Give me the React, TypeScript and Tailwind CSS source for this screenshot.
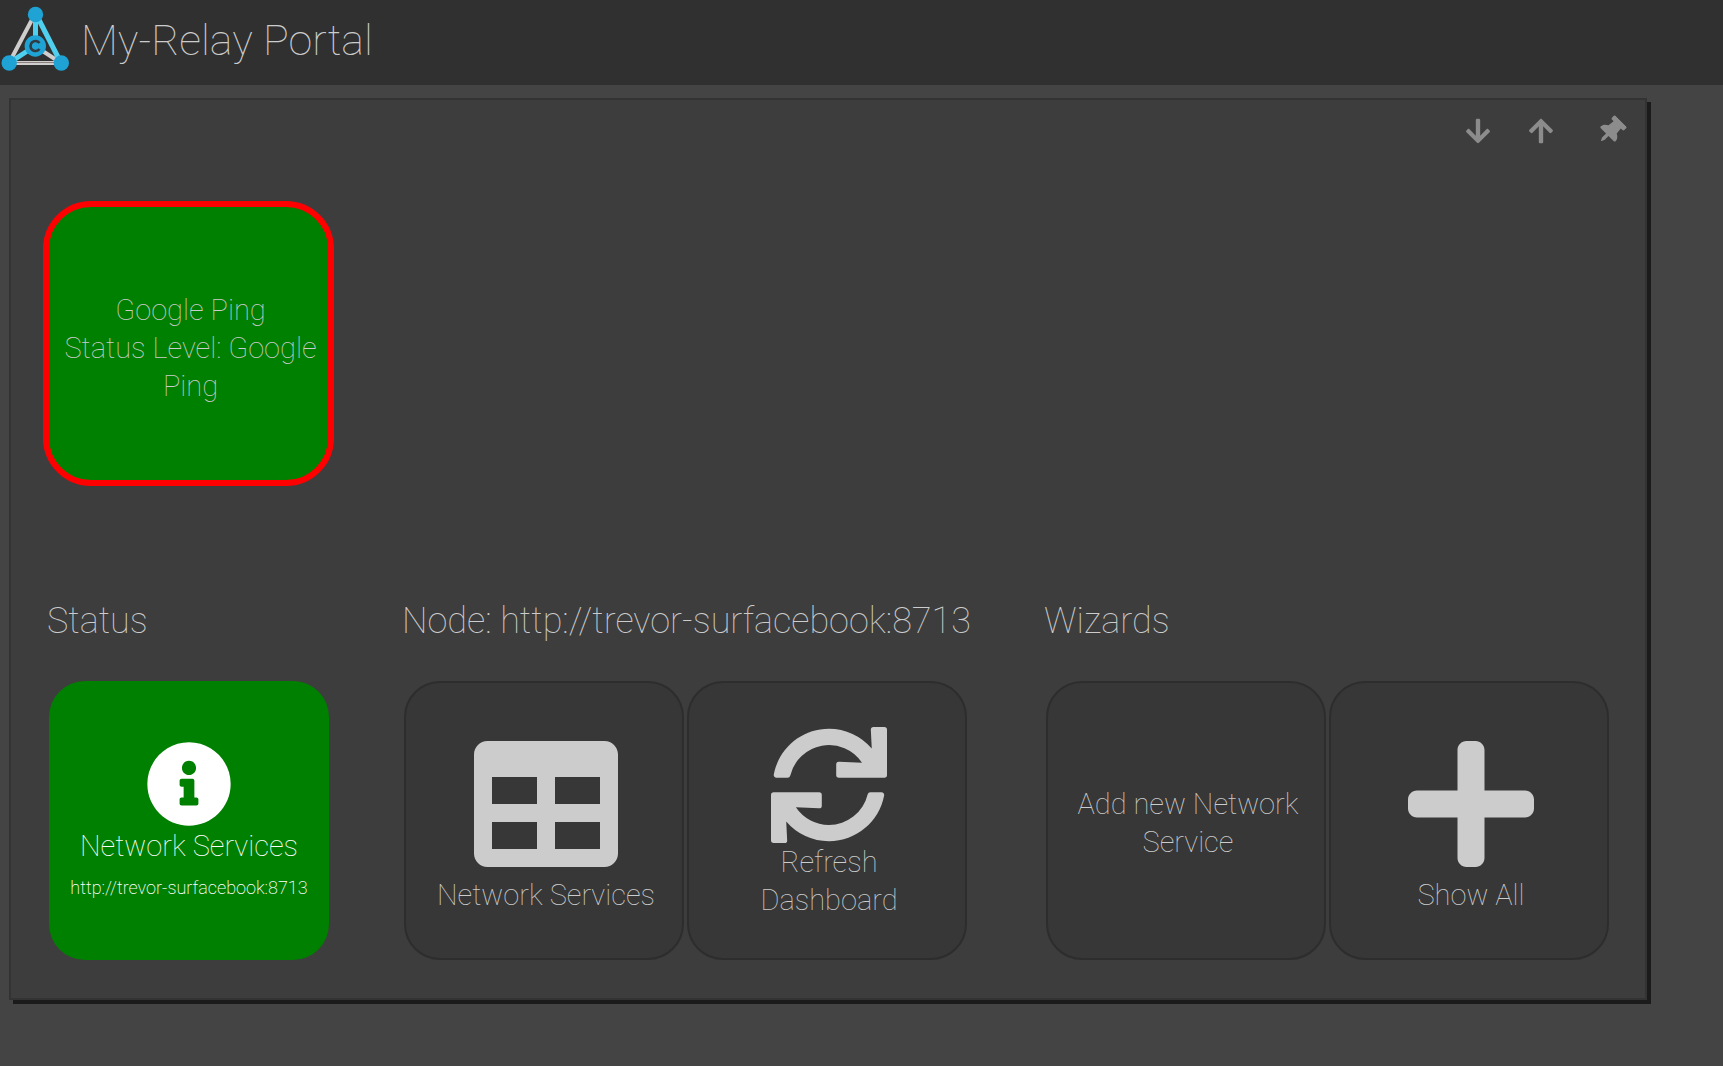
import React from "react";
import {
  FaArrowDown,
  FaArrowUp,
  FaInfoCircle,
  FaPlus,
  FaSync,
  FaTable,
  FaThumbtack,
} from "react-icons/fa";

function Logo() {
  return (
    <svg viewBox="0 0 70 72" className="h-[72px] w-[70px] shrink-0" aria-hidden="true">
      <g strokeWidth="4" stroke="#d0cdcd" fill="none">
        <path d="M35 14 L9 63" />
        <path d="M9 63 H61" />
        <path d="M35 46 L61 63" />
      </g>
      <path d="M9 62.500 H61" stroke="#8a8080" strokeWidth="1" />
      <g stroke="#4fd0ee" strokeWidth="5" fill="none">
        <path d="M35.500 14 V46" />
        <path d="M36 14 L61 63" />
        <path d="M35 46 L9 63" />
      </g>
      <g fill="#1fa3d4">
        <circle cx="35.500" cy="14.500" r="7.700" />
        <circle cx="9.200" cy="63" r="7.700" />
        <circle cx="61.300" cy="63" r="7.700" />
        <circle cx="35.300" cy="46" r="10.700" />
      </g>
      <path
        d="M39.500 43 A5 5 0 1 0 39.500 49"
        stroke="#303a40"
        strokeWidth="2.600"
        fill="none"
      />
    </svg>
  );
}

type TileProps = { children: React.ReactNode; variant?: "dark" | "green" | "alert" };

const variants = {
  dark: "h-[279px] w-[280px] rounded-[36px] border-2 border-[#2d2d2d] bg-[#373737] pt-1 pr-5 pl-6",
  green: "h-[279px] w-[280px] rounded-[36px] bg-[#008000] px-3 pt-1.5 text-white",
  alert:
    "h-[285px] w-[291px] rounded-[48px] border-[6px] border-[#ff0000] bg-[#008000] pt-2 pr-2 pl-3",
};

function Tile({ children, variant = "dark" }: TileProps) {
  return (
    <button
      type="button"
      className={`flex shrink-0 flex-col items-center justify-center text-center text-[29px] leading-[38px] ${variants[variant]}`}
    >
      {children}
    </button>
  );
}

function Section({ title, children }: { title: string; children: React.ReactNode }) {
  return (
    <section>
      <h2 className="text-[36px] leading-[48px] whitespace-nowrap">{title}</h2>
      <div className="mt-9 ml-[2px] flex gap-[3px]">{children}</div>
    </section>
  );
}

export default function App() {
  return (
    <div className="min-h-screen bg-[#444444] font-['Roboto',sans-serif] font-thin text-[#cccccc]">
      <header className="flex h-[85px] items-start bg-[#303030]">
        <Logo />
        <h1 className="ml-[11px] text-[43px] leading-[80px]">My-Relay Portal</h1>
      </header>

      <main className="px-[9px] pt-[13px]">
        <div className="w-fit border-2 border-[#333333] bg-[#3d3d3d] pr-9 pb-[38px] pl-8 shadow-[4px_4px_0_0_#1b1b1b]">
          <div className="-mr-4 flex h-[61px] items-center justify-end text-[28px] text-[#8c8c8c]">
            <button type="button" aria-label="Move down" className="mr-[35px]">
              <FaArrowDown />
            </button>
            <button type="button" aria-label="Move up" className="mr-[42px]">
              <FaArrowUp />
            </button>
            <button type="button" aria-label="Pin" className="rotate-45">
              <FaThumbtack />
            </button>
          </div>

          <div className="mt-10">
            <Tile variant="alert">
              <span>Google Ping</span>
              <span>Status Level: Google Ping</span>
            </Tile>
          </div>

          <div className="mt-[111px] ml-1 flex gap-[73px]">
            <Section title="Status">
              <Tile variant="green">
                <FaInfoCircle className="text-[86px]" />
                <span>Network Services</span>
                <span className="mt-1 text-[18px] leading-[38px] font-extralight">
                  http://trevor-surfacebook:8713
                </span>
              </Tile>
            </Section>
            <Section title="Node: http://trevor-surfacebook:8713">
              <Tile>
                <FaTable className="text-[144px]" />
                <span>Network Services</span>
              </Tile>
              <Tile>
                <FaSync className="text-[116px]" />
                <span>Refresh Dashboard</span>
              </Tile>
            </Section>
            <Section title="Wizards">
              <Tile>
                <span>Add new Network Service</span>
              </Tile>
              <Tile>
                <FaPlus className="text-[144px]" />
                <span>Show All</span>
              </Tile>
            </Section>
          </div>
        </div>
      </main>
    </div>
  );
}
